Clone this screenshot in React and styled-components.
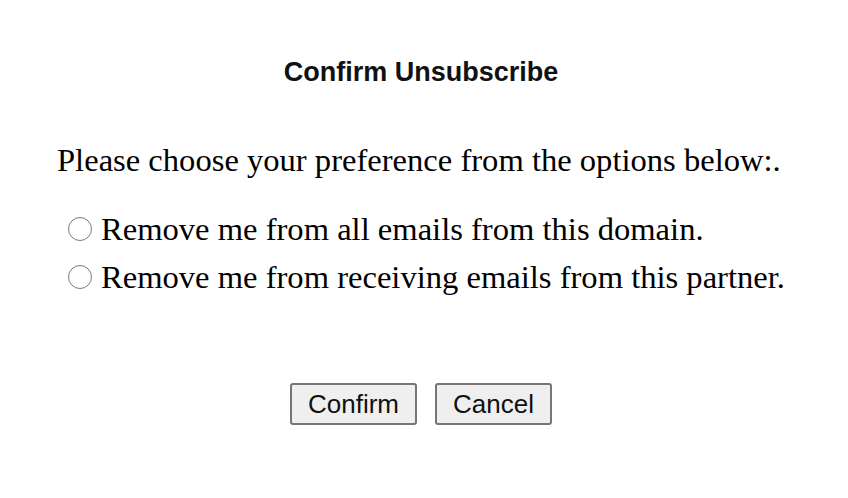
import React from 'react';
import styled, { createGlobalStyle } from 'styled-components';

const GlobalStyle = createGlobalStyle`
  html, body {
    margin: 0;
    padding: 0;
    background: #ffffff;
  }
`;

const Page = styled.div`
  width: 848px;
  height: 498px;
  box-sizing: border-box;
  padding: 56px 0 0 57px;
  font-family: "Liberation Serif", "Times New Roman", serif;
  color: #000;
`;

const Title = styled.h1`
  margin: 0;
  width: 728px;
  text-align: center;
  font-family: "Liberation Sans", Arial, sans-serif;
  font-weight: bold;
  font-size: 27px;
  line-height: 32px;
  color: #111;
`;

const Intro = styled.p`
  margin: 54px 0 0;
  font-size: 32.6px;
  line-height: 36px;
  white-space: nowrap;
`;

const Options = styled.div`
  display: flex;
  flex-direction: column;
  gap: 12px;
  margin-top: 33px;
  padding-left: 11px;
`;

const Option = styled.label`
  display: flex;
  align-items: center;
  font-size: 32.6px;
  line-height: 36px;
  white-space: nowrap;
`;

const Radio = styled.input.attrs({ type: 'radio' })`
  appearance: none;
  width: 24px;
  height: 24px;
  margin: 0 9px 0 0;
  border: 1.5px solid #7a7a7a;
  border-radius: 50%;
  background: #fff;
  box-sizing: border-box;
`;

const Actions = styled.div`
  display: flex;
  justify-content: center;
  gap: 18px;
  width: 728px;
  margin-top: 88px;
`;

const Button = styled.button`
  box-sizing: border-box;
  height: 42px;
  padding: 0 16px;
  font-family: "Liberation Sans", Arial, sans-serif;
  font-size: 26px;
  color: #111;
  background: #efefef;
  border: 2px solid #767676;
  border-radius: 3px;
`;

export default function App() {
  return (
    <>
      <GlobalStyle />
      <Page>
        <Title>Confirm Unsubscribe</Title>
        <Intro>Please choose your preference from the options below:.</Intro>
        <Options>
          <Option>
            <Radio name="pref" />
            Remove me from all emails from this domain.
          </Option>
          <Option>
            <Radio name="pref" />
            Remove me from receiving emails from this partner.
          </Option>
        </Options>
        <Actions>
          <Button>Confirm</Button>
          <Button>Cancel</Button>
        </Actions>
      </Page>
    </>
  );
}
